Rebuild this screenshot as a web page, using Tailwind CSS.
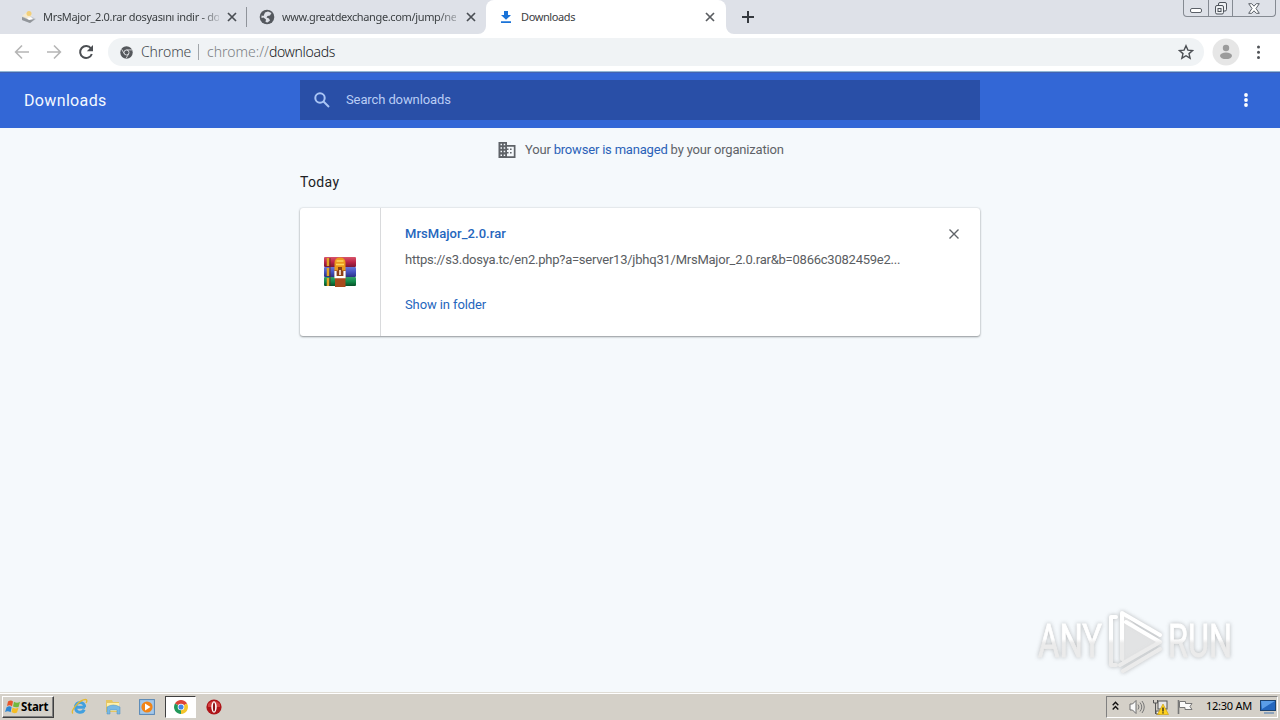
<!DOCTYPE html>
<html lang="en">
<head>
<meta charset="utf-8">
<title>Downloads</title>
<script src="https://cdn.jsdelivr.net/npm/@tailwindcss/browser@4"></script>
</head>
<body class="w-[1280px] h-[720px] overflow-hidden flex flex-col bg-[#f5f9fc] font-['Roboto',sans-serif] text-[13px] relative">

<!-- Tab strip -->
<header class="h-[34px] shrink-0 flex bg-[#dee1e8] font-['Noto_Sans',sans-serif] text-[11px] text-[#3c4043]">
  <div class="w-[246px] h-[34px] flex items-center pl-5">
    <svg class="w-4 h-4 shrink-0" viewBox="0 0 16 16"><path d="M2 8l6-2 8 4-6 4-8-3z" fill="#c3c7cc"/><path d="M2 8l7 3 6-1-5 4-8-3z" fill="#92969b"/><path d="M2 7l5-4 5 3-4 4z" fill="#f5ead0"/><circle cx="9" cy="4.500" r="2.500" fill="#f2cf79"/><path d="M7 9l4-1 2 2-4 1z" fill="#fff"/></svg>
    <span class="ml-[7px] w-[176px] shrink-0 whitespace-nowrap tracking-[-0.32px] [mask-image:linear-gradient(to_right,black_157px,transparent_181px)]">MrsMajor_2.0.rar dosyasını indir - do</span>
    <svg class="ml-2 w-[10px] h-[10px]" viewBox="0 0 10 10" stroke="#4a4e54" stroke-width="1.700"><path d="M1 1l8 8M9 1l-8 8"/></svg>
  </div>
  <div class="w-px h-5 mt-[7px] bg-[#90949b]"></div>
  <div class="w-[239px] h-[34px] flex items-center pl-3">
    <svg class="w-4 h-4 shrink-0" viewBox="0 0 16 16"><circle cx="8" cy="8" r="7.300" fill="#54585e"/><path d="M6 3.500l3-1 3.500 1.500-1.500 2.500-2.500.5-1 1.500L10 9.500l1 2-2.500 2-2-.5.5-2.500-2.500-2-2 .5V6.500l2 .5z" fill="#dee1e8"/></svg>
    <span class="ml-[7px] w-[174px] shrink-0 whitespace-nowrap tracking-[-0.36px] [mask-image:linear-gradient(to_right,black_155px,transparent_184px)]">www.greatdexchange.com/jump/ne</span>
    <svg class="ml-[10px] w-[10px] h-[10px]" viewBox="0 0 10 10" stroke="#4a4e54" stroke-width="1.700"><path d="M1 1l8 8M9 1l-8 8"/></svg>
  </div>
  <div class="w-[240px] h-[34px] flex items-center pl-3 bg-white rounded-t-[8px] relative">
    <svg class="absolute left-[-8px] bottom-0 w-2 h-2" viewBox="0 0 8 8"><path d="M8 0v8H0a8 8 0 0 0 8-8z" fill="#fff"/></svg>
    <svg class="absolute right-[-8px] bottom-0 w-2 h-2" viewBox="0 0 8 8"><path d="M0 0v8h8a8 8 0 0 1-8-8z" fill="#fff"/></svg>
    <svg class="w-4 h-4 shrink-0" viewBox="0 0 16 16" fill="#1a73d8"><path d="M6 2h4v4h3l-5 4.800L3 6h3zM3 12.200h10v1.700H3z"/></svg>
    <span class="ml-[7px] w-[174px] tracking-[-0.4px]">Downloads</span>
    <svg class="ml-[10px] w-[10px] h-[10px]" viewBox="0 0 10 10" stroke="#5a5d61" stroke-width="1.700"><path d="M1 1l8 8M9 1l-8 8"/></svg>
  </div>
  <svg class="w-3 h-3 ml-4 mt-[11px]" viewBox="0 0 12 12" stroke="#35393f" stroke-width="2"><path d="M6 0v12M0 6h12"/></svg>
  <div class="ml-auto mr-1 w-[93px] h-[17px] flex border border-t-0 border-[#858a92] rounded-b-[4px]">
    <div class="w-[25px] flex items-center justify-center border-r border-[#858a92]"><svg class="w-3 h-4 mt-1" viewBox="0 0 12 16"><rect x=".5" y="6.500" width="11" height="4" rx="1.500" fill="#fff" stroke="#5b6068"/></svg></div>
    <div class="w-[25px] flex items-center justify-center border-r border-[#858a92]"><svg class="w-[14px] h-[14px]" viewBox="0 0 14 14" fill="#eef0f3" stroke="#4d525a"><rect x="4.500" y="1.500" width="8" height="8.500" rx="1.500"/><rect x="1.500" y="4.500" width="8" height="8.500" rx="1.500"/><rect x="4" y="7.500" width="3" height="3"/></svg></div>
    <div class="w-[42px] flex items-center justify-center"><svg class="w-3 h-[11px]" viewBox="0 0 12 11"><path d="M.7.7h3L6 3.200 8.300.7h3L8 5.500l3.300 4.800h-3L6 7.800l-2.300 2.500h-3L4 5.500z" fill="#fff" stroke="#5b6068" stroke-linejoin="round"/></svg></div>
  </div>
</header>

<!-- Toolbar -->
<div class="h-[38px] shrink-0 flex items-center bg-white border-b border-[#93b8d6] pl-[14px] pb-px">
  <svg class="w-4 h-4" viewBox="0 0 16 16" fill="none" stroke="#b5b5b5" stroke-width="1.600"><path d="M15 8H2M8 1.500L1.600 8 8 14.500"/></svg>
  <svg class="w-4 h-4 ml-4" viewBox="0 0 16 16" fill="none" stroke="#b5b5b5" stroke-width="1.600"><path d="M1 8h13M8 1.500L14.400 8 8 14.500"/></svg>
  <svg class="w-4 h-4 ml-4" viewBox="0 0 16 16"><path d="M13 4.500A6 6 0 1 0 13.800 10" fill="none" stroke="#4c4f53" stroke-width="2"/><path d="M15 1v6.200H8.800z" fill="#4c4f53"/></svg>
  <div class="ml-[14px] w-[1096px] h-7 rounded-full bg-[#f0f3f5] flex items-center pl-3 font-['Noto_Sans',sans-serif] text-[14px] font-light text-[#55595e]">
    <svg class="w-[13px] h-[13px] shrink-0" viewBox="0 0 14 14"><circle cx="7" cy="7" r="6.700" fill="#55585c"/><circle cx="7" cy="7" r="2.700" fill="none" stroke="#e3e5e7" stroke-width="1"/><path d="M7 4.200h6M4.600 8.300L1.700 3.500M9.400 8.300L6.500 13.400" stroke="#e3e5e7" fill="none" stroke-width=".9"/></svg>
    <span class="ml-2 w-[50px] text-[#44484d] tracking-[-0.1px] mb-px">Chrome</span>
    <span class="ml-[7px] w-px h-4 bg-[#a2a6aa]"></span>
    <span class="ml-2 text-[#7b7f84] mb-px">chrome://<span class="text-[#17191c] tracking-[-0.32px]">downloads</span></span>
    <svg class="ml-auto mr-[10px] w-4 h-4" viewBox="0 0 16 16"><path d="M8 1.800l1.900 4.300 4.700.4-3.600 3.100 1.100 4.600L8 11.700l-4.100 2.500L5 9.600 1.400 6.500l4.700-.4z" fill="none" stroke="#4c4f54" stroke-width="1.400"/></svg>
  </div>
  <svg class="ml-2 w-7 h-7" viewBox="0 0 28 28"><circle cx="14" cy="14" r="13.500" fill="#e6e6e6"/><circle cx="14" cy="10" r="3.200" fill="#9b9b9b"/><ellipse cx="14" cy="17.800" rx="6" ry="3.300" fill="#9b9b9b"/></svg>
  <svg class="ml-4 w-[5px] h-4" viewBox="0 0 5 16" fill="#505357"><circle cx="2.500" cy="3" r="1.500"/><circle cx="2.500" cy="8.200" r="1.500"/><circle cx="2.500" cy="13.400" r="1.500"/></svg>
</div>

<!-- Page header -->
<div class="h-14 shrink-0 flex items-center bg-[#3367d6] border-t border-[#4463b0] pl-6 pb-px">
  <h1 class="w-[276px] pt-px text-[16px] tracking-[0.35px] text-[#f4f9ff]">Downloads</h1>
  <div class="w-[680px] h-10 bg-[#294fa7] flex items-center pl-[13px] text-[#b9cdf5]">
    <svg class="w-[18px] h-[18px]" viewBox="0 0 18 18" fill="none" stroke="#a9c5f5" stroke-width="2"><circle cx="7" cy="7" r="4.700"/><path d="M10.500 10.500l5.500 5.500"/></svg>
    <span class="ml-[15px] tracking-[-0.11px]">Search downloads</span>
  </div>
  <svg class="ml-auto mr-[31px] w-[6px] h-4" viewBox="0 0 6 16" fill="#fff"><circle cx="3" cy="3" r="1.900"/><circle cx="3" cy="8" r="1.900"/><circle cx="3" cy="13" r="1.900"/></svg>
</div>

<!-- Page content -->
<main class="flex-1 w-full">
  <div class="h-11 flex items-center pl-[498px] text-[#5f6368]">
    <svg class="w-[18px] h-[18px]" viewBox="0 0 18 18" fill="#5f6368"><path fill-rule="evenodd" d="M.5 1h8.500v3h8.500v13H.5zM2.500 2.700v1.500H4V2.700zm3.200 0v1.500h1.500V2.700zM2.500 6.200v1.500H4V6.200zm3.200 0v1.500h1.500V6.200zM2.500 9.800v1.500H4V9.800zm3.200 0v1.500h1.500V9.800zM2.500 13.400v1.500H4v-1.500zm3.200 0v1.500h1.500v-1.500zM9 5.700v1.800h1.500V9H9v2h1.500v1.500H9v2.800h6.800V5.700zm3 1.800h1.600V9H12zm0 3.500h1.600v1.500H12z"/></svg>
    <span class="ml-[9px] tracking-[-0.19px]">Your <a class="text-[#2b62b8]">browser is managed</a> by your organization</span>
  </div>
  <section class="w-[680px] mx-auto">
    <h2 class="h-9 leading-[20px] text-[14px] tracking-[0.35px] text-[#202124]">Today</h2>
    <article class="h-32 flex bg-white rounded-[3px] shadow-[0_1px_2px_rgba(60,64,67,0.5),0_0_2px_rgba(60,64,67,0.2)]">
      <div class="w-[81px] border-r border-[#d9dadc] flex items-center justify-center">
        <svg class="w-8 h-[30px]" viewBox="0 0 32 30">
          <defs>
            <linearGradient id="r" x2="0" y2="1"><stop stop-color="#d8556a"/><stop offset=".5" stop-color="#bd2548"/><stop offset="1" stop-color="#7c1735"/></linearGradient>
            <linearGradient id="b" x2="0" y2="1"><stop stop-color="#6a78d6"/><stop offset=".5" stop-color="#4552c2"/><stop offset="1" stop-color="#2b3384"/></linearGradient>
            <linearGradient id="g" x2="0" y2="1"><stop stop-color="#35a36a"/><stop offset=".5" stop-color="#128a4a"/><stop offset="1" stop-color="#075027"/></linearGradient>
          </defs>
          <rect width="32" height="10" rx="1" fill="url(#r)"/><rect y="10" width="32" height="10" rx="1" fill="url(#b)"/><rect y="20" width="32" height="9" rx="1" fill="url(#g)"/>
          <path d="M4 1v28" stroke="#e2a427" stroke-width="2.500" stroke-dasharray="8 2"/><path d="M6 1v28" stroke="#5b2a16" stroke-width=".8"/>
          <path d="M11 20h10.500v10H11z" fill="#a94b1c"/><path d="M10.500 6q0-5.500 5.500-5.500T21.500 6v8h-11z" fill="#eb9a1d"/><path d="M12.500 4h7M12 7.500h8" stroke="#ffd85c" stroke-width="1.500"/>
          <path d="M14 10h4v4h-4z" fill="#874013"/><path d="M10.500 13.500h11V21h-11z" fill="#8d3f18"/><path d="M11.500 14v6.200h9V14" fill="none" stroke="#fff" stroke-width="2.200"/><path d="M16 13v5" stroke="#f8e3c7" stroke-width="1.700"/>
        </svg>
      </div>
      <div class="flex-1 pl-6 pt-[15px] text-[#5a5d62] flex flex-col items-start">
        <a class="h-[22px] leading-[22px] font-medium tracking-[0.05px] text-[#2566bd]">MrsMajor_2.0.rar</a>
        <span class="mt-[5px] h-5 leading-5 whitespace-nowrap tracking-[-0.235px]">https://s3.dosya.tc/en2.php?a=server13/jbhq31/MrsMajor_2.0.rar&amp;b=0866c3082459e2...</span>
        <a class="mt-[25px] h-5 leading-5 tracking-[-0.1px] text-[#2566bd]">Show in folder</a>
      </div>
      <svg class="w-[10px] h-[10px] mt-[21px] mr-[21px]" viewBox="0 0 10 10" stroke="#5f6368" stroke-width="1.400"><path d="M.5.5l9 9M9.500.5l-9 9"/></svg>
    </article>
  </section>
</main>

<!-- Watermark overlay -->
<div class="absolute left-[1036px] top-[606px] w-[200px] h-[70px]">
  <svg class="w-full h-full overflow-visible drop-shadow-[0_0_2px_rgba(90,90,90,0.4)]" viewBox="0 0 200 70">
    <defs><linearGradient id="w" gradientUnits="userSpaceOnUse" x1="0" y1="33" x2="0" y2="37"><stop stop-color="#fff"/><stop offset="1" stop-color="#ebebeb"/></linearGradient></defs>
    <g fill="url(#w)" stroke="url(#w)" stroke-width=".8" font-family="Roboto, sans-serif" font-size="46" font-weight="400">
      <text x="2" y="51" textLength="64" lengthAdjust="spacingAndGlyphs">ANY</text>
      <text x="132" y="51" textLength="64" lengthAdjust="spacingAndGlyphs">RUN</text>
    </g>
    <path d="M86 8v50l35-22z" fill="#ececec" opacity=".7"/>
    <path d="M80 11h-5v48h5M86 53V7l38 22M84 59l40-23-34-20M87 65l37-22" fill="none" stroke="url(#w)" stroke-width="4" stroke-linecap="round" stroke-linejoin="round"/>
  </svg>
</div>

<!-- Taskbar -->
<footer class="h-7 shrink-0 bg-[#d4d0c8] border-t border-[#dfdcd5] shadow-[inset_0_1px_0_white] flex items-center font-['Noto_Sans',sans-serif] text-black">
  <button class="ml-[2px] mt-[1px] w-[52px] h-[22px] border border-t-white border-l-white border-r-[#404040] border-b-[#404040] shadow-[inset_-1px_-1px_0_#808080] flex items-center pl-[1px] text-[11.5px] font-bold tracking-[-0.2px]">
    <svg class="w-4 h-4 mr-[1px] shrink-0" viewBox="0 0 16 16"><path d="M4 2.500q3-2 5 0L8 7.500Q6 5.500 3 7z" fill="#e8562a"/><path d="M10 2.700q3 2 6 0l-1.300 5Q12 9 9 7.500z" fill="#72b83d"/><path d="M2.600 8.300q3-2 5 0l-1 5Q4 11.500 1 13z" fill="#2e87d4"/><path d="M8.600 8.600q3 2 6 0L13 13.600q-3 1.500-5.500-.5z" fill="#f5bd24"/></svg>Start
  </button>
  <svg class="ml-[17px] w-[17px] h-[17px]" viewBox="0 0 17 17" fill="none"><path d="M14 9.300H4.700M13.600 9.300c0-6.500-9-6.500-9 0s7 6 8.600 2.400" stroke="#42a0df" stroke-width="3"/><path d="M2 15.500C-1.500 13 9 1.500 14.500 1.500c2 0 1.500 2 .5 3.500" stroke="#e4b932" stroke-width="1.300"/></svg>
  <svg class="ml-[17px] w-4 h-4" viewBox="0 0 16 16"><path d="M1 1h6l1 2h6v10H1z" fill="#e6c662"/><path d="M2 4h12v8H2z" fill="#fff0a9"/><path d="M2 8q6-4 13 0v7h-3v-4H5v4H2z" fill="#78b9e4" stroke="#4d8fbf" stroke-width=".5"/></svg>
  <svg class="ml-[18px] w-4 h-4" viewBox="0 0 16 16"><rect x=".6" y=".6" width="14.800" height="14.800" fill="#a4c8ea" stroke="#5686b6"/><circle cx="8" cy="8" r="5.600" fill="#f18417"/><path d="M6 4.500v7L11.500 8z" fill="#fff"/></svg>
  <div class="ml-[10px] w-[31px] h-[22px] bg-white border border-t-[#404040] border-l-[#404040] border-r-white border-b-white flex items-center justify-center">
    <svg class="w-[14px] h-[14px]" viewBox="0 0 16 16"><path d="M8 8L1.100 4A8 8 0 0 1 14.900 4z" fill="#dd4438"/><path d="M8 8l6.900-4A8 8 0 0 1 8 16z" fill="#f4c52b"/><path d="M8 8v8A8 8 0 0 1 1.100 4z" fill="#22985a"/><circle cx="8" cy="8" r="3.800" fill="#fff"/><circle cx="8" cy="8" r="2.900" fill="#4285e8"/></svg>
  </div>
  <svg class="ml-[10px] w-4 h-4" viewBox="0 0 16 16"><circle cx="8" cy="8" r="7.600" fill="#ae1519"/><path d="M2 5q6-6 12 0v3H2z" fill="#d24040"/><ellipse cx="8" cy="8" rx="2.700" ry="5.700" fill="#fff"/><ellipse cx="8" cy="8" rx="1.100" ry="4.600" fill="#8e1518"/></svg>
  <div class="ml-auto mr-[2px] w-[172px] h-[22px] border border-t-[#808080] border-l-[#808080] border-r-white border-b-white flex items-center pl-[5px] text-[11px]">
    <svg class="w-[7px] h-[10px] mb-[2px]" viewBox="0 0 7 10" fill="none" stroke="#111" stroke-width="1.400"><path d="M.7 4.200l2.800-3 2.800 3M.7 8.500l2.800-3 2.800 3"/></svg>
    <svg class="ml-[10px] w-[16px] h-4" viewBox="0 0 16 16"><path d="M1 5h2.500L7 1.500v13L3.500 11H1z" fill="#fafafa" stroke="#6e6e6e"/><path d="M9 5.500q2 2.500 0 5M11 3.500q3.500 4.500 0 9M13 2q4.500 6 0 12" fill="none" stroke="#777"/></svg>
    <svg class="ml-[7px] w-[17px] h-4" viewBox="0 0 17 16"><path d="M1.500 1v3h4V1M3.500 4v11" fill="none" stroke="#555"/><rect x="6" y="2" width="9" height="8" fill="#e8e8e8" stroke="#555"/><path d="M4 12h4v3H4z" fill="#eee" stroke="#555"/><path d="M11 5l5.500 10.500h-11z" fill="#ffd21e" stroke="#c99b00" stroke-width=".6"/><path d="M11 8.500v4M11 13.300v1.200" stroke="#222" stroke-width="1.300"/></svg>
    <svg class="ml-[8px] w-4 h-4" viewBox="0 0 16 16"><path d="M1.500 1v14" stroke="#777" stroke-width="1.600"/><path d="M2.500 2.500h6v2H15l-2 3 2 3H8v-2H2.500z" fill="#fafafa" stroke="#777"/></svg>
    <span class="ml-[13px] w-[47px] whitespace-nowrap tracking-[-0.25px]">12:30 AM</span>
    <svg class="ml-[7px] w-4 h-[14px]" viewBox="0 0 16 14"><rect x=".5" y=".5" width="15" height="10" fill="#2467be" stroke="#1b426f"/><path d="M1 1h14L2 9z" fill="#5b9ee8"/><path d="M4 13h10" stroke="#7495b9" stroke-width="1.500"/></svg>
  </div>
</footer>
</body>
</html>
